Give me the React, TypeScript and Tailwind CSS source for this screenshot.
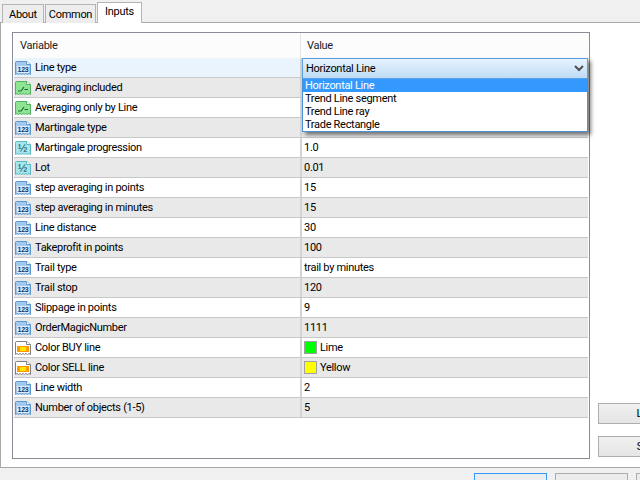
import React from 'react';

type IconKind = 'int' | 'bool' | 'num' | 'color';

interface Row {
  name: string;
  icon: IconKind;
  value?: string;
  swatch?: string;
}

const rows: Row[] = [
  { name: 'Line type', icon: 'int' },
  { name: 'Averaging included', icon: 'bool' },
  { name: 'Averaging only by Line', icon: 'bool' },
  { name: 'Martingale type', icon: 'int' },
  { name: 'Martingale progression', icon: 'num', value: '1.0' },
  { name: 'Lot', icon: 'num', value: '0.01' },
  { name: 'step averaging in points', icon: 'int', value: '15' },
  { name: 'step averaging in minutes', icon: 'int', value: '15' },
  { name: 'Line distance', icon: 'int', value: '30' },
  { name: 'Takeprofit in points', icon: 'int', value: '100' },
  { name: 'Trail type', icon: 'int', value: 'trail by minutes' },
  { name: 'Trail stop', icon: 'int', value: '120' },
  { name: 'Slippage in points', icon: 'int', value: '9' },
  { name: 'OrderMagicNumber', icon: 'int', value: '1111' },
  { name: 'Color BUY line', icon: 'color', value: 'Lime', swatch: 'bg-[#00ff00]' },
  { name: 'Color SELL line', icon: 'color', value: 'Yellow', swatch: 'bg-[#ffff00]' },
  { name: 'Line width', icon: 'int', value: '2' },
  { name: 'Number of objects (1-5)', icon: 'int', value: '5' },
];

const options = ['Horizontal Line', 'Trend Line segment', 'Trend Line ray', 'Trade Rectangle'];

const palette: Record<IconKind, { fill: string; stroke: string }> = {
  int: { fill: '#a5c9ec', stroke: '#5f97cf' },
  bool: { fill: '#8ee492', stroke: '#52b060' },
  num: { fill: '#a6e6ea', stroke: '#5ab8c4' },
  color: { fill: '#ffffff', stroke: '#808080' },
};

const VarIcon = ({ kind }: { kind: IconKind }) => {
  const { fill, stroke } = palette[kind];
  return (
    <svg width="16" height="16" viewBox="0 0 16 16" className="shrink-0">
      <path
        d="M0.5 2.5 Q0.5 1.5 1.5 1.5 H11.5 L15.5 4.5 V14.5 L14 13.5 L12.5 14.5 L11 13.5 L9.5 14.5 L8 13.5 L6.5 14.5 L5 13.5 L3.5 14.5 L2 13.5 L0.5 14.5 Z"
        fill={fill}
        stroke={stroke}
      />
      <path d="M11.5 1.5 V4.5 H15.5" fill="#ffffff" stroke={stroke} />
      {kind === 'int' && (
        <>
          <rect x="2" y="6" width="12" height="7" fill="#dcebfa" />
          <text x="8" y="12" textAnchor="middle" fontSize="7" fontWeight="700" fontFamily="'Liberation Sans', sans-serif" fill="#0f3768">
            123
          </text>
        </>
      )}
      {kind === 'num' && (
        <text x="7.5" y="12" textAnchor="middle" fontSize="11" fontFamily="'Liberation Sans', sans-serif" fill="#0e4a55">
          ½
        </text>
      )}
      {kind === 'bool' && <path d="M3 11 L6 11 L9 7 M9.5 9.5 H13" fill="none" stroke="#1b6a36" strokeWidth="1.2" />}
      {kind === 'color' && (
        <>
          <rect x="2" y="6" width="12" height="6" fill="#ff9a00" />
          <rect x="5" y="7" width="6" height="4" fill="#ffe600" />
        </>
      )}
    </svg>
  );
};

const TableRow = ({ row, index }: { row: Row; index: number }) => {
  const shade = index === 0 ? 'bg-[#e9f4fd]' : index % 2 === 1 ? 'bg-[#e9e9e9]' : 'bg-white';
  return (
    <div className={`flex h-5 border-b border-[#c8c8c8] ${shade}`}>
      <div className="w-[288px] flex items-center gap-[4px] pl-px border-r-2 border-[#d4d4d4]">
        <VarIcon kind={row.icon} />
        <span className="whitespace-nowrap">{row.name}</span>
      </div>
      <div className="flex-1 flex items-center gap-[3px] pl-[2px]">
        {row.swatch && <span className={`w-[13px] h-[13px] border border-[#a0a0a0] ${row.swatch}`} />}
        {row.value && <span className="whitespace-nowrap">{row.value}</span>}
      </div>
    </div>
  );
};

const App: React.FC = () => {
  return (
    <div className="w-[640px] h-[480px] overflow-hidden bg-[#f0f0f0] text-[11px] leading-none tracking-[-0.3px] text-black font-['Roboto',sans-serif]">
      {/* Tabs */}
      <div className="flex items-end h-[23px] pl-[2px] gap-px relative z-10">
        <div className="w-[42px] h-[19px] flex items-center justify-center border border-b-0 border-[#b4b4b4] bg-[#ededed]">About</div>
        <div className="w-[51px] h-[19px] flex items-center justify-center border border-b-0 border-[#b4b4b4] bg-[#ededed]">Common</div>
        <div className="w-[45px] h-[21px] flex items-center justify-center pb-[3px] border border-b-0 border-[#b4b4b4] bg-white">Inputs</div>
      </div>

      {/* Page */}
      <div className="w-[720px] h-[446px] -mt-px flex gap-2 bg-white border border-[#a9a9a9] pl-[11px] pt-[9px]">
        <div className="relative w-[578px] h-[427px] shrink-0 border border-[#8c8c96] pl-px">
          <div className="flex h-[25px] bg-[#fcfcfc] text-[#1a1a1a]">
            <div className="w-[287px] flex items-center pl-[6px] border-r border-[#e4e4e4]">Variable</div>
            <div className="flex items-center pl-[6px]">Value</div>
          </div>
          <div className="w-[574px]">
            {rows.map((row, i) => (
              <TableRow key={row.name} row={row} index={i} />
            ))}
          </div>

          {/* Open combo box */}
          <div className="absolute left-[289px] top-[25px] w-[286px] shadow-[3px_3px_4px_rgba(0,0,0,0.5)]">
            <div className="h-[21px] flex items-center justify-between pl-[3px] pr-[3px] border border-[#5aa0e0] bg-gradient-to-b from-[#e8f3fd] to-[#bedcf6]">
              <span>Horizontal Line</span>
              <svg width="10" height="7" viewBox="0 0 10 7">
                <path d="M1 1 L5 5 L9 1" fill="none" stroke="#505050" strokeWidth="2" />
              </svg>
            </div>
            <div className="border border-t-0 border-[#4a90d9] bg-white">
              {options.map((opt, i) => (
                <div key={opt} className={`h-[13px] flex items-center pl-[2px] whitespace-nowrap ${i === 0 ? 'bg-[#3399ff] text-white' : ''}`}>
                  {opt}
                </div>
              ))}
            </div>
          </div>
        </div>

        {/* Side buttons */}
        <div className="flex flex-col gap-[12px] pt-[371px]">
          <button className="w-[100px] h-[21px] border border-[#adadad] bg-gradient-to-b from-[#f0f0f0] to-[#e5e5e5] text-center">Load</button>
          <button className="w-[100px] h-[21px] border border-[#adadad] bg-gradient-to-b from-[#f0f0f0] to-[#e5e5e5] text-center">Save</button>
        </div>
      </div>

      {/* Footer buttons */}
      <div className="flex gap-[8px] pl-[474px] pt-[5px]">
        <button className="w-[73px] h-[23px] shrink-0 border border-[#3399ff] bg-[#ececec]" />
        <button className="w-[73px] h-[23px] shrink-0 border border-[#adadad] bg-[#ececec]" />
        <button className="w-[73px] h-[23px] shrink-0 border border-[#adadad] bg-[#ececec]" />
      </div>
    </div>
  );
};

export default App;
